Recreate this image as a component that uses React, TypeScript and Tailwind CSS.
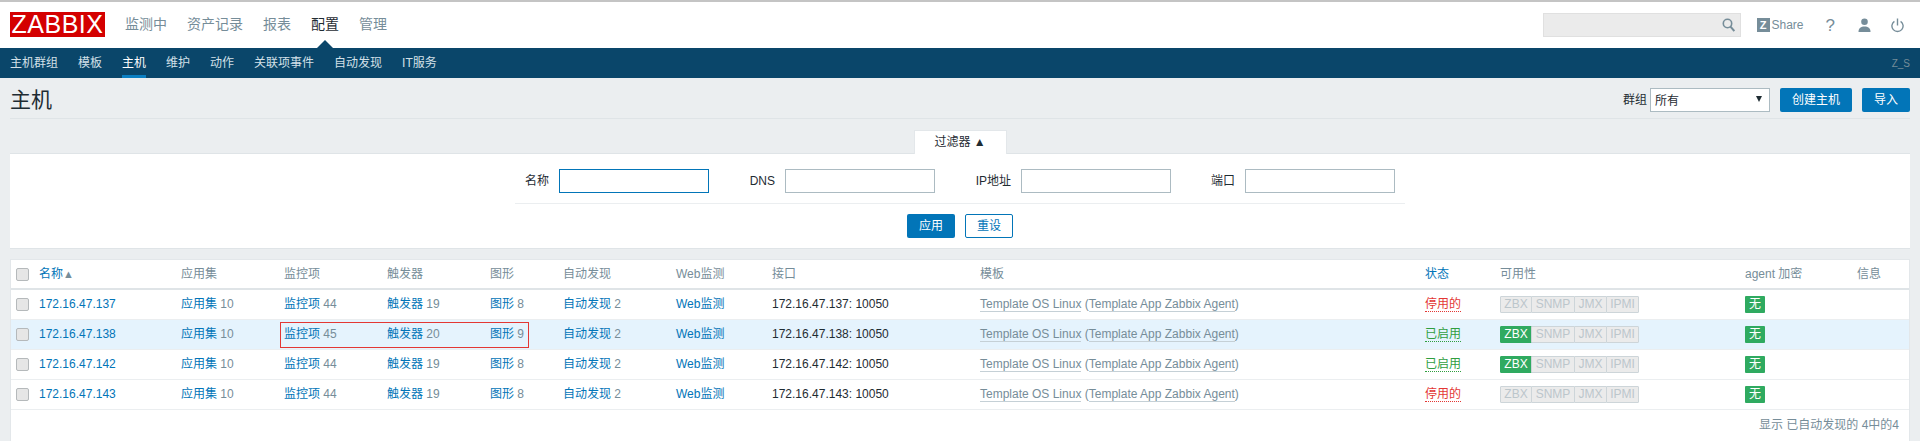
const font = "font-['Liberation_Sans','Noto_Sans_CJK_SC',sans-serif]";

const topNav = ["监测中", "资产记录", "报表", "配置", "管理"];
const subNav = ["主机群组", "模板", "主机", "维护", "动作", "关联项事件", "自动发现", "IT服务"];
const columns = [
  { title: "应用集" },
  { title: "监控项" },
  { title: "触发器" },
  { title: "图形" },
  { title: "自动发现" },
  { title: "Web监测" },
  { title: "接口" },
  { title: "模板" },
  { title: "状态", link: true },
  { title: "可用性" },
  { title: "agent 加密" },
  { title: "信息" },
];
const hosts = [
  { ip: "172.16.47.137", items: 44, triggers: 19, graphs: 8, enabled: false, zbx: false, active: false },
  { ip: "172.16.47.138", items: 45, triggers: 20, graphs: 9, enabled: true, zbx: true, active: true },
  { ip: "172.16.47.142", items: 44, triggers: 19, graphs: 8, enabled: true, zbx: true, active: false },
  { ip: "172.16.47.143", items: 44, triggers: 19, graphs: 8, enabled: false, zbx: false, active: false },
];

function Checkbox() {
  return <span className="block w-[13px] h-[13px] rounded-[2px] border border-[#b5b9bb] bg-[#e6e6e6]" />;
}

function CountLink({ label, count }: { label: string; count: number }) {
  return (
    <>
      <a className="text-[#0275b8]">{label}</a> <span className="text-[#768d99]">{count}</span>
    </>
  );
}

function Field({ label, width, active }: { label: string; width: string; active?: boolean }) {
  return (
    <div className={`flex items-center justify-end gap-[10px] ${width}`}>
      <span className="text-[#1f2c33]">{label}</span>
      <input
        className={`w-[150px] h-6 bg-white border ${active ? "border-[#0275b8]" : "border-[#acbbc2]"}`}
      />
    </div>
  );
}

function Badge({ label, width, on }: { label: string; width: string; on?: boolean }) {
  return (
    <span
      className={`${width} h-[17px] text-center leading-[15px] border -ml-px first:ml-0 rounded-[1px] ${
        on
          ? "bg-[#2faa60] border-[#2faa60] text-white"
          : "bg-[#ebebeb] border-[#cdd5d9] text-[#bcc6cb]"
      }`}
    >
      {label}
    </span>
  );
}

export default function App() {
  return (
    <div className={`${font} text-xs w-[1920px] h-[441px] overflow-hidden bg-[#ebeef0] text-[#1f2c33]`}>
      <div className="h-[2px] bg-[#c4c4c4]" />
      <header className="h-[46px] bg-white flex items-center pl-[10px] pr-[16px] relative">
        <div className="w-[95px] h-[25px] bg-[#d40000] text-white text-[25px] leading-[25px] text-center tracking-[0.5px] -mt-[1px]">
          ZABBIX
        </div>
        <nav className="flex gap-[20px] ml-5 text-[14px] text-[#768d99] -mt-[1px]">
          {topNav.map((n) => (
            <span key={n} className={n === "配置" ? "relative text-[#1f2c33]" : ""}>
              {n}
              {n === "配置" && (
                <span className="absolute left-1/2 -translate-x-1/2 top-[25px] w-0 h-0 border-x-[8px] border-x-transparent border-b-[8px] border-b-[#0a466a]" />
              )}
            </span>
          ))}
        </nav>
        <div className="ml-auto flex items-center text-[#768d99]">
          <div className="w-[198px] h-6 bg-[#ebebeb] border border-[#e0e0e0] flex items-center justify-end pr-[5px]">
            <svg width="13" height="14" viewBox="0 0 13 14" fill="none" stroke="#768d99" strokeWidth="1.6">
              <circle cx="5.5" cy="5.5" r="4.2" />
              <path d="M8.5 8.7 12.3 13" strokeWidth="2" />
            </svg>
          </div>
          <div className="ml-4 flex items-center gap-[2px]">
            <span className="w-[13px] h-[14px] bg-[#768d99] text-white text-[11px] leading-[14px] font-bold text-center">Z</span>
            <span>Share</span>
          </div>
          <span className="ml-[22px] text-[17px] leading-none">?</span>
          <svg className="ml-[23px]" width="13" height="14" viewBox="0 0 13 14" fill="#768d99">
            <circle cx="6.5" cy="3.8" r="3.3" />
            <path d="M0.5 14c0-4 2.5-5.5 6-5.5s6 1.5 6 5.5z" />
          </svg>
          <svg className="ml-[20px]" width="13" height="15" viewBox="0 0 13 15" fill="none" stroke="#768d99" strokeWidth="1.4">
            <path d="M6.5 0.5v7" />
            <path d="M3.4 3.3a5.6 5.6 0 1 0 6.2 0" />
          </svg>
        </div>
      </header>

      <div className="h-[30px] bg-[#0a466a] flex pl-[10px] pr-[10px] text-[#d3e0e8]">
        <nav className="flex gap-[20px] h-full">
          {subNav.map((n) => (
            <span
              key={n}
              className={`leading-[31px] ${n === "主机" ? "text-white border-b-[3px] border-[#0b7fc2]" : ""}`}
            >
              {n}
            </span>
          ))}
        </nav>
        <span className="ml-auto leading-[31px] text-[10px] text-[#768d99]">Z_S</span>
      </div>

      <div className="mx-[10px] h-[41px] border-b border-[#dfe4e7] flex items-start">
        <h1 className="text-[21px] leading-[26px] mt-[9px] font-normal">主机</h1>
        <div className="ml-auto flex items-center mt-[10px]">
          <span className="mr-[3px]">群组</span>
          <div className="relative w-[120px] h-6 bg-white border border-[#acbbc2] pl-1 leading-[24px]">
            所有
            <span className="absolute right-[7px] top-[7px] w-0 h-0 border-x-[3px] border-x-transparent border-t-[6px] border-t-[#1f2c33]" />
          </div>
          <button className="ml-[10px] w-[72px] h-6 bg-[#0275b8] text-white rounded-[2px]">创建主机</button>
          <button className="ml-[10px] w-[48px] h-6 bg-[#0275b8] text-white rounded-[2px]">导入</button>
        </div>
      </div>

      <div className="flex justify-center mt-[11px] h-[23px]">
        <div className="w-[93px] bg-white border-x border-t border-[#e3e7ea] text-center leading-[22px] z-10 -mb-[1px]">
          过滤器 <span>▲</span>
        </div>
      </div>
      <section className="mx-[10px] h-[96px] bg-white border-y border-[#dfe4e7]">
        <div className="flex h-[50px] items-start pt-[15px] ml-[505px] border-b border-[#ebeef0] w-[890px]">
          <Field label="名称" width="w-[194px]" active />
          <Field label="DNS" width="w-[226px]" />
          <Field label="IP地址" width="w-[236px]" />
          <Field label="端口" width="w-[224px]" />
        </div>
        <div className="flex justify-center gap-[10px] mt-[10px]">
          <button className="w-[48px] h-6 bg-[#0275b8] text-white rounded-[2px]">应用</button>
          <button className="w-[48px] h-6 bg-white border border-[#0275b8] text-[#0275b8] rounded-[2px]">重设</button>
        </div>
      </section>

      <section className="relative mx-[10px] mt-[10px] bg-white border-t border-x border-[#e3e7ea] h-[182px]">
        <table className="table-fixed border-collapse w-[1898px]">
          <colgroup>
            {[28, 142, 103, 103, 103, 73, 113, 96, 208, 445, 75, 245, 112, 52].map((w, i) => (
              <col key={i} style={{ width: w }} />
            ))}
          </colgroup>
          <thead>
            <tr className="h-[29px] border-b-[2px] border-[#dfe4e7] text-left text-[#768d99]">
              <th className="font-normal pl-[5px]"><Checkbox /></th>
              <th className="font-normal text-[#0275b8]">
                名称<span className="text-[11px] text-[#768d99]">▲</span>
              </th>
              {columns.map((c) => (
                <th key={c.title} className={`font-normal ${c.link ? "text-[#0275b8]" : ""}`}>{c.title}</th>
              ))}
            </tr>
          </thead>
          <tbody>
            {hosts.map((h) => (
              <tr key={h.ip} className={`h-[30px] border-b border-[#ebeef0] ${h.active ? "bg-[#e5f3fd]" : ""}`}>
                <td className="pl-[5px]"><Checkbox /></td>
                <td className="text-[#0275b8]">{h.ip}</td>
                <td><CountLink label="应用集" count={10} /></td>
                <td><CountLink label="监控项" count={h.items} /></td>
                <td><CountLink label="触发器" count={h.triggers} /></td>
                <td><CountLink label="图形" count={h.graphs} /></td>
                <td><CountLink label="自动发现" count={2} /></td>
                <td className="text-[#0275b8]">Web监测</td>
                <td>{h.ip}: 10050</td>
                <td className="text-[#768d99] whitespace-nowrap">
                  <span className="border-b border-[#c5d0d6]">Template OS Linux</span> (
                  <span className="border-b border-[#c5d0d6]">Template App Zabbix Agent</span>)
                </td>
                <td>
                  <span className={`border-b border-dotted ${h.enabled ? "text-[#2f9e3f] border-[#2f9e3f]" : "text-[#e33734] border-[#e33734]"}`}>
                    {h.enabled ? "已启用" : "停用的"}
                  </span>
                </td>
                <td>
                  <div className="flex">
                    <Badge label="ZBX" width="w-[32px]" on={h.zbx} />
                    <Badge label="SNMP" width="w-[44px]" />
                    <Badge label="JMX" width="w-[33px]" />
                    <Badge label="IPMI" width="w-[33px]" />
                  </div>
                </td>
                <td>
                  <span className="block w-5 h-[17px] leading-[17px] text-center bg-[#2faa60] text-white rounded-[1px]">无</span>
                </td>
                <td />
              </tr>
            ))}
          </tbody>
        </table>
        <div className="text-right pr-[10px] pt-[7px] text-[#768d99]">显示 已自动发现的 4中的4</div>
        <div className="absolute left-[269px] top-[62px] w-[249px] h-[26px] border border-[#e33734]" />
      </section>
    </div>
  );
}
